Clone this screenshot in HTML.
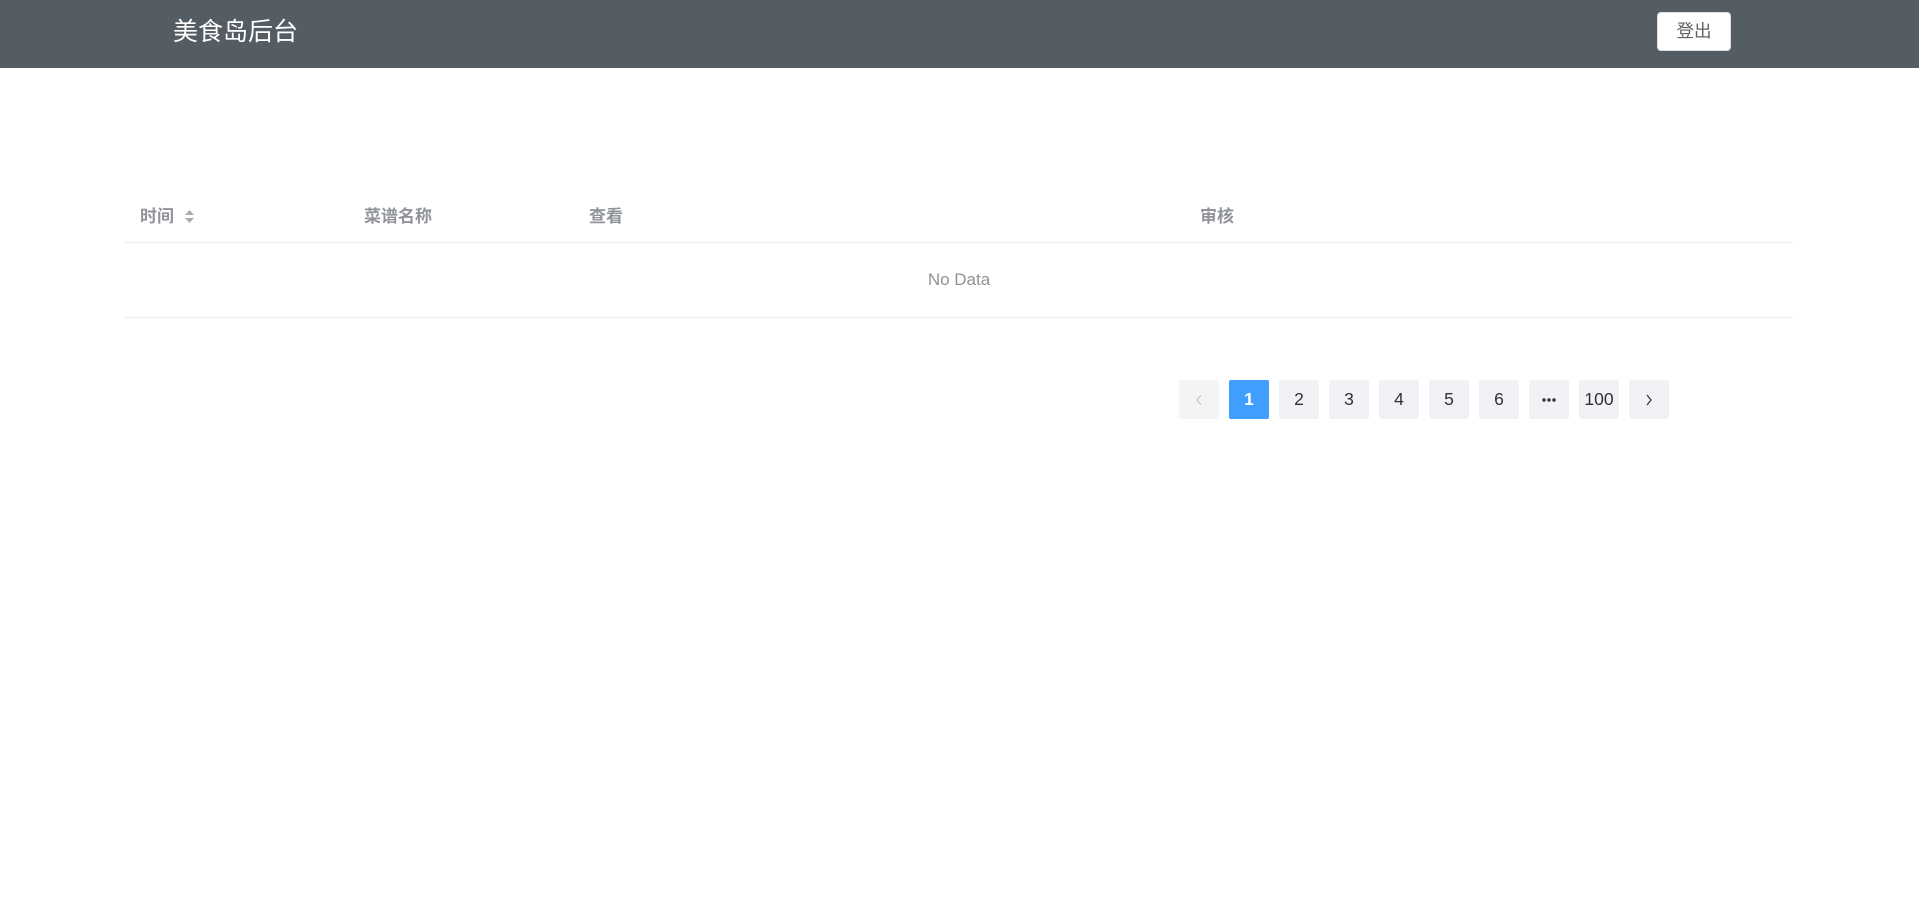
<!DOCTYPE html>
<html><head><meta charset="utf-8"><style>
body{margin:0;width:1919px;height:906px;background:#fff;font-family:"Liberation Sans","Noto Sans CJK SC",sans-serif;position:relative;overflow:hidden}
.hd{position:absolute;left:0;top:0;width:1919px;height:68px;background:#545c64}
.title{position:absolute;left:173px;top:15px;font-size:25px;line-height:34px;color:#fff}
.btn{position:absolute;left:1657px;top:12px;width:74px;height:39px;background:#fff;border-radius:4px;box-sizing:border-box;border:1px solid #dcdfe6;color:#606266;font-size:17.5px;line-height:37px;text-align:center}
.th{position:absolute;top:206px;font-size:17px;line-height:22px;font-weight:bold;color:#909399}
.line{position:absolute;left:124px;width:1670px;height:1px;background:#ebeef5}
.nd{position:absolute;left:124px;width:1670px;top:269px;text-align:center;font-size:17px;line-height:22px;color:#909399}
.pg{position:absolute;top:380px;width:40px;height:39px;background:#f0f2f5;border-radius:2px;text-align:center;line-height:39px;font-size:17.5px;color:#303133}
.pg.on{background:#409eff;color:#fff;font-weight:bold}
.pg.dis{background:#f4f4f5;color:#c0c4cc}
</style></head><body>
<div class="hd"><div class="title">美食岛后台</div><div class="btn">登出</div></div>
<div class="th" style="left:140px">时间<svg width="13" height="20" style="position:absolute;left:43px;top:1px" viewBox="0 0 13 20"><path d="M6.5 3 L11 8 L2 8Z M2 11 L11 11 L6.5 16Z" fill="#a8abb2"/></svg></div>
<div class="th" style="left:364px">菜谱名称</div>
<div class="th" style="left:589px">查看</div>
<div class="th" style="left:1200px">审核</div>
<div class="line" style="top:242px"></div>
<div class="nd">No Data</div>
<div class="line" style="top:317px"></div>
<div class="pg dis" style="left:1179px"><svg width="10" height="14" viewBox="0 0 10 14" style="vertical-align:middle"><path d="M7 2 L3 7 L7 12" fill="none" stroke="#c0c4cc" stroke-width="1.2"/></svg></div>
<div class="pg on" style="left:1229px">1</div>
<div class="pg" style="left:1279px">2</div>
<div class="pg" style="left:1329px">3</div>
<div class="pg" style="left:1379px">4</div>
<div class="pg" style="left:1429px">5</div>
<div class="pg" style="left:1479px">6</div>
<div class="pg" style="left:1529px"><svg width="16" height="6" viewBox="0 0 16 6" style="vertical-align:middle"><circle cx="3" cy="3" r="1.7" fill="#303133"/><circle cx="8" cy="3" r="1.7" fill="#303133"/><circle cx="13" cy="3" r="1.7" fill="#303133"/></svg></div>
<div class="pg" style="left:1579px">100</div>
<div class="pg" style="left:1629px"><svg width="10" height="14" viewBox="0 0 10 14" style="vertical-align:middle"><path d="M3 2 L7 7 L3 12" fill="none" stroke="#303133" stroke-width="1.2"/></svg></div>
</body></html>
